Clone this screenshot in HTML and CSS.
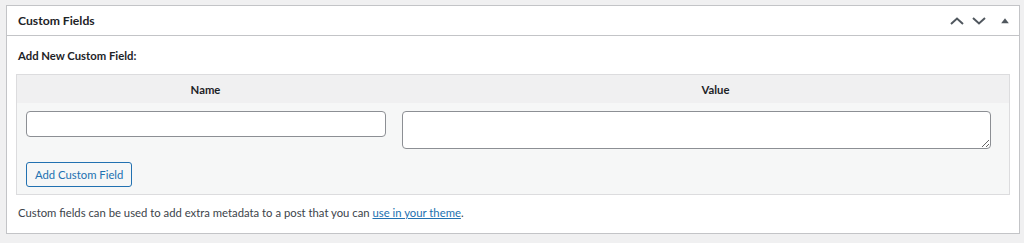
FILE: index.html
```html
<!DOCTYPE html>
<html lang="en">
<head>
<meta charset="utf-8">
<title>Custom Fields</title>
<link rel="stylesheet" href="styles.css">
</head>
<body>
<div class="postbox">
  <div class="postbox-header">
    <h2 class="hndle">Custom Fields</h2>
    <div class="handle-actions">
      <button class="handle-btn" type="button" aria-label="Move up">
        <svg width="14" height="8" viewBox="0 0 14 8"><polyline points="1,7 7,1.6 13,7" fill="none" stroke="#50575e" stroke-width="2"/></svg>
      </button>
      <button class="handle-btn" type="button" aria-label="Move down">
        <svg width="14" height="8" viewBox="0 0 14 8"><polyline points="1,1 7,6.4 13,1" fill="none" stroke="#50575e" stroke-width="2"/></svg>
      </button>
      <button class="handle-btn toggle" type="button" aria-label="Toggle panel">
        <svg width="8" height="6" viewBox="0 0 8 6"><polygon points="4,0.3 7.8,5.3 0.2,5.3" fill="#50575e"/></svg>
      </button>
    </div>
  </div>
  <div class="inside">
    <p class="add-title">Add New Custom Field:</p>
    <div class="meta-table">
      <div class="meta-head">
        <div class="th th-name">Name</div>
        <div class="th th-value">Value</div>
      </div>
      <div class="meta-body">
        <div class="cell cell-name"><input class="meta-input" type="text"></div>
        <div class="cell cell-value"><textarea class="meta-textarea"></textarea></div>
        <div class="cell cell-submit"><button class="btn-secondary" type="button">Add Custom Field</button></div>
      </div>
    </div>
    <p class="note">Custom fields can be used to add extra metadata to a post that you can <a href="#">use in your theme</a>.</p>
  </div>
</div>
</body>
</html>
```

FILE: styles.css
```css
* { box-sizing: border-box; }
html, body { margin: 0; }
body {
  background: #f0f0f1;
  padding: 5px 4px 0 6px;
  font-family: Lato, "Liberation Sans", sans-serif;
  font-size: 11.3px;
  color: #3c434a;
}
.postbox {
  background: #fff;
  border: 1px solid #c3c4c7;
}
.postbox-header {
  height: 30px;
  border-bottom: 1px solid #c3c4c7;
  display: flex;
  align-items: center;
  justify-content: space-between;
  padding: 0 0 0 11px;
}
.hndle {
  margin: 0;
  font-size: 12.2px;
  font-weight: 700;
  line-height: 20px;
  color: #1d2327;
}
.handle-actions {
  display: flex;
  align-items: center;
  height: 100%;
}
.handle-btn {
  border: 0;
  background: none;
  padding: 0;
  margin: 0;
  display: flex;
  align-items: center;
  justify-content: center;
  width: 22px;
  height: 100%;
}
.handle-btn.toggle { width: 29px; }
.inside { padding: 0 9px; }
.add-title {
  margin: 10px 0 8px 2px;
  line-height: 20px;
  font-weight: 700;
  color: #1d2327;
}
.meta-table {
  border: 1px solid #dcdcde;
  background: #f6f7f7;
}
.meta-head {
  display: grid;
  grid-template-columns: 377px 1fr;
  height: 28px;
  background: #f0f0f1;
  font-weight: 700;
  color: #1d2327;
  align-items: center;
  text-align: center;
}
.th-value { padding-left: 28px; }
.meta-body {
  display: grid;
  grid-template-columns: 377px 1fr;
  padding: 8px 0 7px;
  row-gap: 13px;
}
.cell-name { padding: 0 8px 0 9px; }
.cell-value { padding: 0 18px 0 8px; }
.cell-submit { grid-column: 1 / 3; padding-left: 9px; }
.meta-input {
  display: block;
  width: 100%;
  height: 26px;
  border: 1px solid #8c8f94;
  border-radius: 4px;
  background: #fff;
  margin: 0;
}
.meta-textarea {
  display: block;
  width: 100%;
  height: 38px;
  border: 1px solid #8c8f94;
  border-radius: 4px;
  background: #fff;
  margin: 0;
  resize: vertical;
}
.btn-secondary {
  height: 25px;
  padding: 0 8px;
  border: 1px solid #2271b1;
  border-radius: 3px;
  background: #f6f7f7;
  color: #2271b1;
  font-family: inherit;
  font-size: 11.3px;
  line-height: 23px;
}
.note {
  margin: 8px 0 0 2px;
  padding-bottom: 10px;
  line-height: 20px;
}
.note a { color: #2271b1; }
```
